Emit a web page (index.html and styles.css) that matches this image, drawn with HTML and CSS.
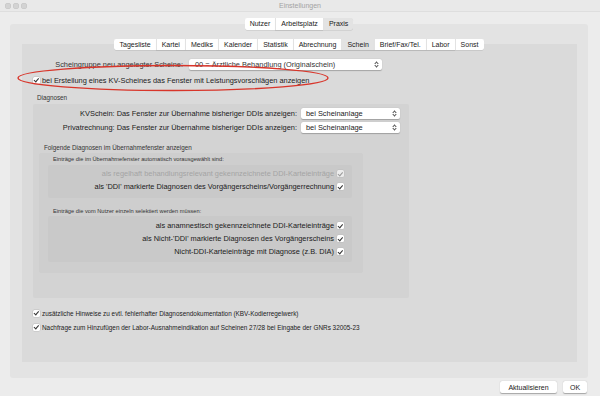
FILE: index.html
```html
<!DOCTYPE html>
<html lang="de">
  <head>
    <meta charset="UTF-8" />
    <title>Einstellungen</title>
    <link rel="stylesheet" href="styles.css">
  </head>
  <body>
    <div class="window">
      <div class="titlebar">
        <div class="lights">
          <span class="light"></span>
          <span class="light"></span>
          <span class="light"></span>
        </div>
        <div class="title">Einstellungen</div>
      </div>

      <div class="outer">
        <div class="seg seg-top">
          <span class="seg-item">Nutzer</span>
          <span class="seg-item">Arbeitsplatz</span>
          <span class="seg-item active">Praxis</span>
        </div>
        <div class="outer-panel">
          <div class="seg seg-inner">
            <span class="seg-item">Tagesliste</span>
            <span class="seg-item">Kartei</span>
            <span class="seg-item">Mediks</span>
            <span class="seg-item">Kalender</span>
            <span class="seg-item">Statistik</span>
            <span class="seg-item">Abrechnung</span>
            <span class="seg-item active">Schein</span>
            <span class="seg-item">Brief/Fax/Tel.</span>
            <span class="seg-item">Labor</span>
            <span class="seg-item">Sonst</span>
          </div>
          <div class="inner-panel">
            <div class="form-row scheingruppe">
              <label>Scheingruppe neu angelegter Scheine:</label>
              <div class="select wide">00 = Ärztliche Behandlung (Originalschein)<span class="arrows"></span></div>
            </div>

            <div class="check-row main-check">
              <span class="cb on"></span>
              <span>bei Erstellung eines KV-Scheines das Fenster mit Leistungsvorschlägen anzeigen</span>
            </div>

            <div class="group-title">Diagnosen</div>
            <div class="box diag-box">
              <div class="form-row">
                <label>KVSchein: Das Fenster zur Übernahme bisheriger DDIs anzeigen:</label>
                <div class="select">bei Scheinanlage<span class="arrows"></span></div>
              </div>
              <div class="form-row second">
                <label>Privatrechnung: Das Fenster zur Übernahme bisheriger DDIs anzeigen:</label>
                <div class="select">bei Scheinanlage<span class="arrows"></span></div>
              </div>

              <div class="sub-title">Folgende Diagnosen im Übernahmefenster anzeigen</div>
              <div class="box show-box">
                <div class="small-title">Einträge die im Übernahmefenster automatisch vorausgewählt sind:</div>
                <div class="box list-box auto">
                  <div class="list-row disabled">als regelhaft behandlungsrelevant gekennzeichnete DDI-Karteieinträge <span class="cb on"></span></div>
                  <div class="list-row">als 'DDI' markierte Diagnosen des Vorgängerscheins/Vorgängerrechnung <span class="cb on"></span></div>
                </div>
                <div class="small-title lower">Einträge die vom Nutzer einzeln selektiert werden müssen:</div>
                <div class="box list-box manual">
                  <div class="list-row">als anamnestisch gekennzeichnete DDI-Karteieinträge <span class="cb on"></span></div>
                  <div class="list-row">als Nicht-'DDI' markierte Diagnosen des Vorgängerscheins <span class="cb on"></span></div>
                  <div class="list-row">Nicht-DDI-Karteieinträge mit Diagnose (z.B. DIA) <span class="cb on"></span></div>
                </div>
              </div>
            </div>

            <div class="check-row bottom-check">
              <span class="cb on"></span>
              <span>zusätzliche Hinweise zu evtl. fehlerhafter Diagnosendokumentation (KBV-Kodierregelwerk)</span>
            </div>
            <div class="check-row bottom-check second">
              <span class="cb on"></span>
              <span>Nachfrage zum Hinzufügen der Labor-Ausnahmeindikation auf Scheinen 27/28 bei Eingabe der GNRs 32005-23</span>
            </div>
          </div>
        </div>
      </div>

      <div class="buttons">
        <button class="btn">Aktualisieren</button>
        <button class="btn ok">OK</button>
      </div>

      <svg class="marker" width="600" height="396" viewBox="0 0 600 396">
        <ellipse cx="173" cy="78" rx="155" ry="12.5" fill="none" stroke="#d8352a" stroke-width="1.4" />
      </svg>
    </div>
  </body>
</html>
```

FILE: styles.css
```css
body {
  margin: 0;
  font-family: "Liberation Sans", Arial, sans-serif;
  color: #1a1a1a;
}

.window {
  position: relative;
  width: 600px;
  height: 396px;
  background: #ececec;
  overflow: hidden;
}

.titlebar {
  position: relative;
  height: 12px;
  background: #e9e9e9;
  border-bottom: 1px solid #dedede;
  box-sizing: border-box;
  display: flex;
  align-items: center;
  justify-content: center;
}

.lights {
  position: absolute;
  left: 5px;
  top: 3px;
  display: flex;
  gap: 2px;
}

.light {
  width: 6px;
  height: 6px;
  border-radius: 50%;
  background: #d3d3d3;
  box-shadow: inset 0 0 0 0.5px #c4c4c4;
}

.title {
  font-size: 7px;
  color: #a3a3a3;
}

/* segmented tabs */
.seg {
  position: relative;
  z-index: 1;
  display: flex;
  justify-content: center;
}

.seg-item {
  background: #fff;
  font-size: 7px;
  height: 12px;
  line-height: 12px;
  padding: 0 5px;
  border-left: 1px solid #e2e2e2;
  box-shadow: 0 0.5px 0.5px rgba(0, 0, 0, 0.15);
}

.seg-item:first-child {
  border-left: none;
  border-radius: 2px 0 0 2px;
}

.seg-item:last-child {
  border-radius: 0 2px 2px 0;
}

.seg-item.active {
  background: #e3e3e3;
}

.outer {
  margin: 6px 12px 0 10px;
}

.seg-top {
  height: 12px;
}

.outer-panel {
  margin-top: -6px;
  height: 354px;
  background: #e3e3e3;
  border-radius: 3px;
  box-sizing: border-box;
  padding-top: 15px;
}

.seg-inner {
  height: 11px;
}

.seg-inner .seg-item {
  height: 11px;
  line-height: 11px;
}

.inner-panel {
  margin: -6px 11px 0 12px;
  height: 318px;
  background: #dadada;
  box-sizing: border-box;
  padding-top: 14px;
  font-size: 7.4px;
}

/* rows */
.form-row {
  display: flex;
  align-items: center;
  justify-content: flex-end;
  gap: 4px;
  height: 12px;
}

.scheingruppe {
  width: 360px;
  gap: 6px;
  color: #333;
}

.select {
  position: relative;
  width: 99px;
  height: 11px;
  line-height: 11px;
  background: #fff;
  border-radius: 2px;
  box-shadow: 0 0.5px 1px rgba(0, 0, 0, 0.25);
  box-sizing: border-box;
  padding-left: 5px;
  font-size: 7.4px;
  white-space: nowrap;
  overflow: hidden;
}

.select.wide {
  width: 193px;
  padding-left: 6px;
}

.arrows {
  position: absolute;
  right: 4px;
  top: 2px;
  width: 4px;
  height: 7px;
}

.arrows::before,
.arrows::after {
  content: "";
  position: absolute;
  left: 0.5px;
  width: 2px;
  height: 2px;
  border-left: 1px solid #555;
  border-top: 1px solid #555;
}

.arrows::before {
  top: 1px;
  transform: rotate(45deg);
}

.arrows::after {
  bottom: 1px;
  transform: rotate(-135deg);
}

.check-row {
  display: flex;
  align-items: center;
  gap: 2px;
  height: 12px;
  padding-left: 11px;
}

.main-check {
  margin-top: 4px;
}

.cb {
  position: relative;
  display: inline-block;
  width: 7px;
  height: 7px;
  background: #fff;
  border-radius: 1.5px;
  box-shadow: 0 0 0 0.5px #bdbdbd;
  flex-shrink: 0;
}

.cb.on::after {
  content: "";
  position: absolute;
  left: 2.2px;
  top: 0.6px;
  width: 1.6px;
  height: 3.6px;
  border-right: 1px solid #333;
  border-bottom: 1px solid #333;
  transform: rotate(40deg);
}

.group-title {
  margin-top: 7px;
  height: 9px;
  line-height: 9px;
  padding-left: 15px;
  font-size: 6.3px;
  color: #333;
}

.box {
  border-radius: 2px;
}

.diag-box {
  margin: 2px 0 0 11px;
  width: 376px;
  height: 194px;
  background: #d3d3d3;
  box-sizing: border-box;
  padding: 3px 9px 0 0;
}

.form-row.second {
  margin-top: 2px;
}

.sub-title {
  margin-top: 10px;
  height: 9px;
  line-height: 9px;
  padding-left: 11px;
  font-size: 6.3px;
  color: #333;
}

.show-box {
  margin: 1px 0 0 6px;
  width: 324px;
  height: 120px;
  background: #cecece;
  box-sizing: border-box;
  padding-top: 2px;
}

.small-title {
  height: 9px;
  line-height: 9px;
  padding-left: 14px;
  font-size: 5.7px;
  color: #333;
}

.small-title.lower {
  margin-top: 9px;
}

.list-box {
  margin: 1px 0 0 9px;
  width: 304px;
  background: #c9c9c9;
  box-sizing: border-box;
  padding: 2px 8px 0 0;
}

.list-box.auto {
  height: 33px;
}

.list-box.manual {
  margin-top: 0;
  height: 46px;
  padding-top: 3px;
}

.list-row {
  display: flex;
  align-items: center;
  justify-content: flex-end;
  gap: 3px;
  height: 13px;
}

.list-row.disabled {
  color: #a4a4a4;
}

.list-row.disabled .cb {
  background: #ececec;
}

.list-row.disabled .cb::after {
  border-color: #9a9a9a;
}

.bottom-check {
  margin-top: 9px;
  font-size: 6.4px;
}

.bottom-check.second {
  margin-top: 2px;
}

.buttons {
  display: flex;
  justify-content: flex-end;
  gap: 6px;
  margin-top: 3px;
  padding-right: 13px;
}

.btn {
  height: 12px;
  padding: 0;
  border: none;
  background: #fff;
  border-radius: 2px;
  box-shadow: 0 0.5px 1px rgba(0, 0, 0, 0.3);
  font-family: "Liberation Sans", Arial, sans-serif;
  font-size: 7px;
  color: #222;
  width: 57px;
}

.btn.ok {
  width: 24px;
}

.marker {
  position: absolute;
  left: 0;
  top: 0;
  pointer-events: none;
}
```
